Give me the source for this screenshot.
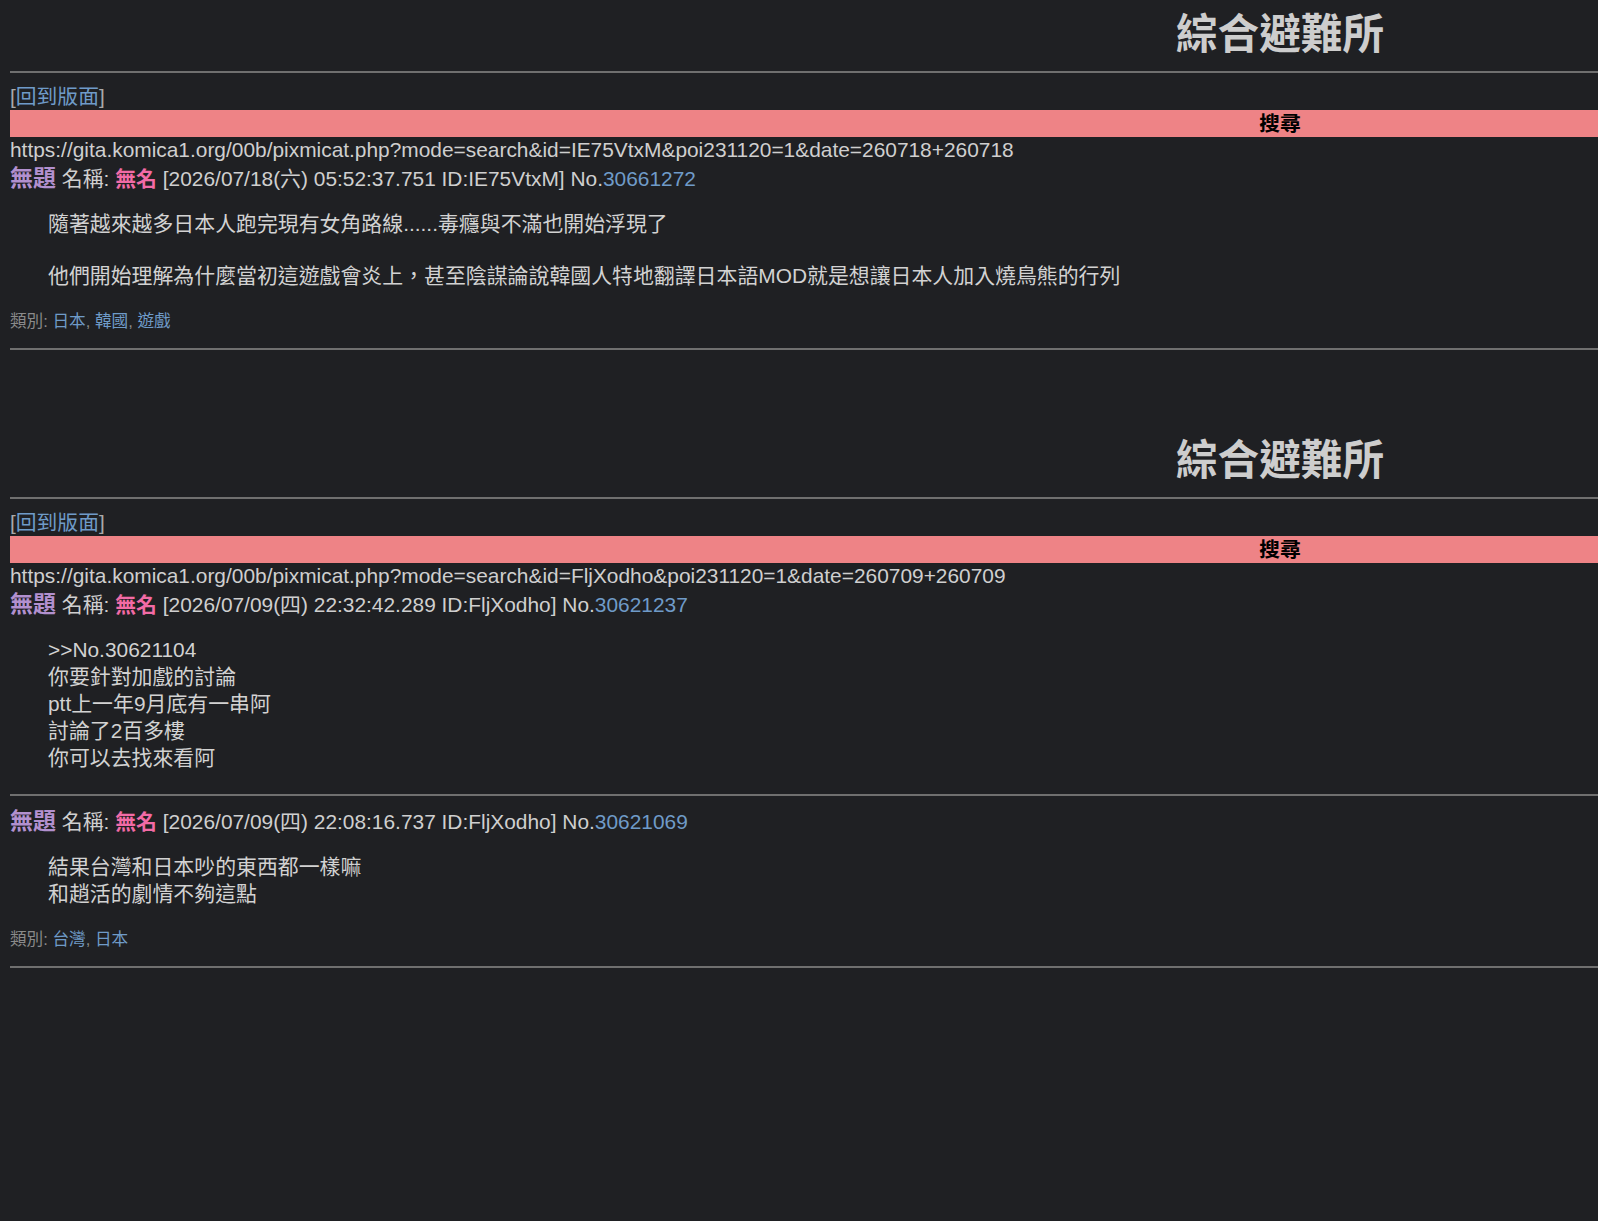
import React from "react";

type Post = {
  date: string;
  id: string;
  no: string;
  lines: string[];
  tags?: string[];
};

function PostHeader({ p }: { p: Post }) {
  return (
    <div className="h-[30px] leading-[30px] text-[20.9px] whitespace-nowrap text-[#cfcfcf]">
      <span className="text-[23px] font-bold text-[#b290cf]">無題</span>{" "}
      名稱: <span className="font-bold text-[#f26ba6]">無名</span> [{p.date} ID:{p.id}] No.
      <a className="text-[#6f9bc8]">{p.no}</a>
    </div>
  );
}

function PostBody({ lines }: { lines: string[] }) {
  return (
    <div className="mt-[17px] pl-[38px] text-[20.9px] text-[#d2d2d2]">
      {lines.map((l, i) =>
        l === "" ? (
          <div key={i} className="h-[25px]" />
        ) : (
          <div key={i} className="h-[27px] leading-[27px] whitespace-nowrap">
            {l}
          </div>
        )
      )}
    </div>
  );
}

function Tags({ tags }: { tags: string[] }) {
  return (
    <div className="mt-[23px] h-[20px] leading-[20px] text-[16.64px] text-[#8a8a8a]">
      類別:{" "}
      {tags.map((t, i) => (
        <span key={t}>
          <a className="text-[#6f9bc8]">{t}</a>
          {i < tags.length - 1 ? ", " : ""}
        </span>
      ))}
    </div>
  );
}

function Rule({ className }: { className: string }) {
  return <div className={"h-[2px] bg-[#6f6f6f] " + className} />;
}

function Board({ url, posts }: { url: string; posts: Post[] }) {
  return (
    <section>
      <div className="h-[71px] pt-[14px] text-center">
        <h1 className="text-[41.6px] leading-[42px] font-bold text-[#cdcdcd]">綜合避難所</h1>
      </div>
      <Rule className="" />
      <div className="mt-[12px] h-[24px] leading-[24px] text-[20.8px] text-[#a9a9a9]">
        [<a className="text-[#6f9bc8]">回到版面</a>]
      </div>
      <div className="mt-[1px] h-[27px] leading-[27px] bg-[#ee8386] text-center text-[20.8px] font-bold text-black">
        搜尋
      </div>
      <div className="h-[26px] leading-[26px] text-[20.9px] whitespace-nowrap text-[#cfcfcf]">{url}</div>
      {posts.map((p, i) => (
        <div key={p.no}>
          {i > 0 && <div className="h-[10px]" />}
          <PostHeader p={p} />
          <PostBody lines={p.lines} />
          {p.tags && <Tags tags={p.tags} />}
          <Rule className={p.tags ? "mt-[16px]" : "mt-[23px]"} />
        </div>
      ))}
    </section>
  );
}

export default function App() {
  return (
    <div className="w-full min-h-screen overflow-hidden bg-[#1f2023] font-['Liberation_Sans','Noto_Sans_CJK_TC',sans-serif]">
      <div className="w-[2540px] ml-[10px]">
        <Board
          url="https://gita.komica1.org/00b/pixmicat.php?mode=search&id=IE75VtxM&poi231120=1&date=260718+260718"
          posts={[
            {
              date: "2026/07/18(六) 05:52:37.751",
              id: "IE75VtxM",
              no: "30661272",
              lines: [
                "隨著越來越多日本人跑完現有女角路線......毒癮與不滿也開始浮現了",
                "",
                "他們開始理解為什麼當初這遊戲會炎上，甚至陰謀論說韓國人特地翻譯日本語MOD就是想讓日本人加入燒鳥熊的行列",
              ],
              tags: ["日本", "韓國", "遊戲"],
            },
          ]}
        />
        <div className="h-[76px]" />
        <Board
          url="https://gita.komica1.org/00b/pixmicat.php?mode=search&id=FljXodho&poi231120=1&date=260709+260709"
          posts={[
            {
              date: "2026/07/09(四) 22:32:42.289",
              id: "FljXodho",
              no: "30621237",
              lines: [">>No.30621104", "你要針對加戲的討論", "ptt上一年9月底有一串阿", "討論了2百多樓", "你可以去找來看阿"],
            },
            {
              date: "2026/07/09(四) 22:08:16.737",
              id: "FljXodho",
              no: "30621069",
              lines: ["結果台灣和日本吵的東西都一樣嘛", "和趙活的劇情不夠這點"],
              tags: ["台灣", "日本"],
            },
          ]}
        />
      </div>
    </div>
  );
}
